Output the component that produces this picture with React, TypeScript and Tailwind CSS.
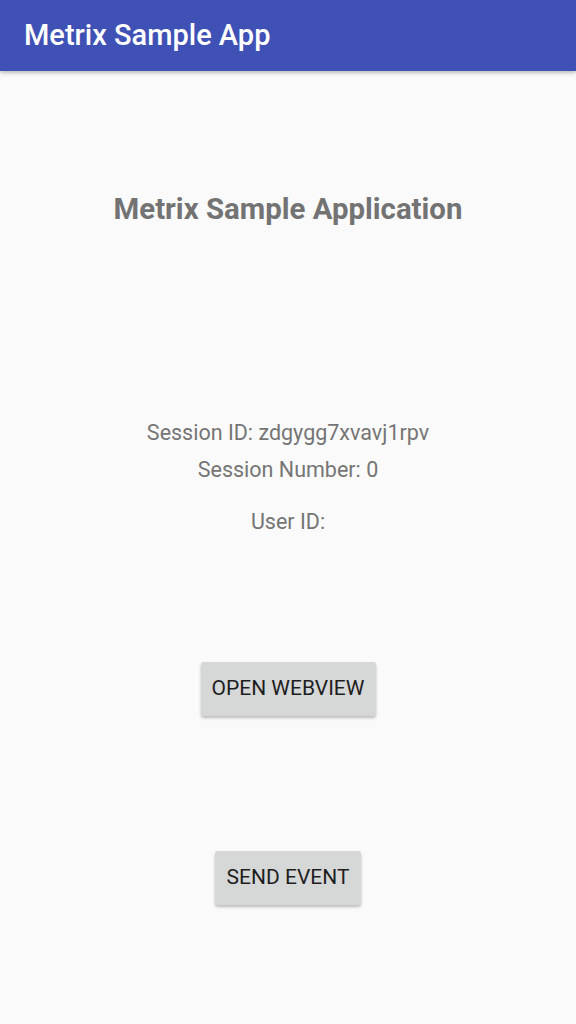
import React from 'react';

const App: React.FC = () => {
  return (
    <div className="w-[576px] h-[1024px] bg-[#fafafa] flex flex-col font-['Roboto',sans-serif]">
      <div className="h-[71px] bg-[#3f51b5] flex items-center px-6 shadow-[0_2px_4px_rgba(0,0,0,0.25)] shrink-0">
        <h1 className="text-[29px] font-medium text-white leading-none">Metrix Sample App</h1>
      </div>

      <div className="flex flex-col items-center">
        <p className="mt-[122px] h-[32px] leading-[32px] text-[29.4px] font-bold text-[#737373]">Metrix Sample Application</p>

        <p className="mt-[196px] leading-[24px] text-[21.5px] text-[#757575]">Session ID: zdgygg7xvavj1rpv</p>
        <p className="mt-[13px] leading-[24px] text-[21.5px] text-[#757575]">Session Number: 0</p>
        <p className="mt-[28px] leading-[24px] text-[21.5px] text-[#757575]">User ID:</p>

        <button className="mt-[128px] w-[175px] h-[54px] rounded-[3px] bg-[#d6d7d7] text-[21px] font-normal text-[#1e1e1e] shadow-[0_2px_3px_rgba(0,0,0,0.25)]">
          OPEN WEBVIEW
        </button>

        <button className="mt-[135px] w-[146px] h-[54px] rounded-[3px] bg-[#d6d7d7] text-[21px] font-normal text-[#1e1e1e] shadow-[0_2px_3px_rgba(0,0,0,0.25)]">
          SEND EVENT
        </button>
      </div>
    </div>
  );
};

export default App;
